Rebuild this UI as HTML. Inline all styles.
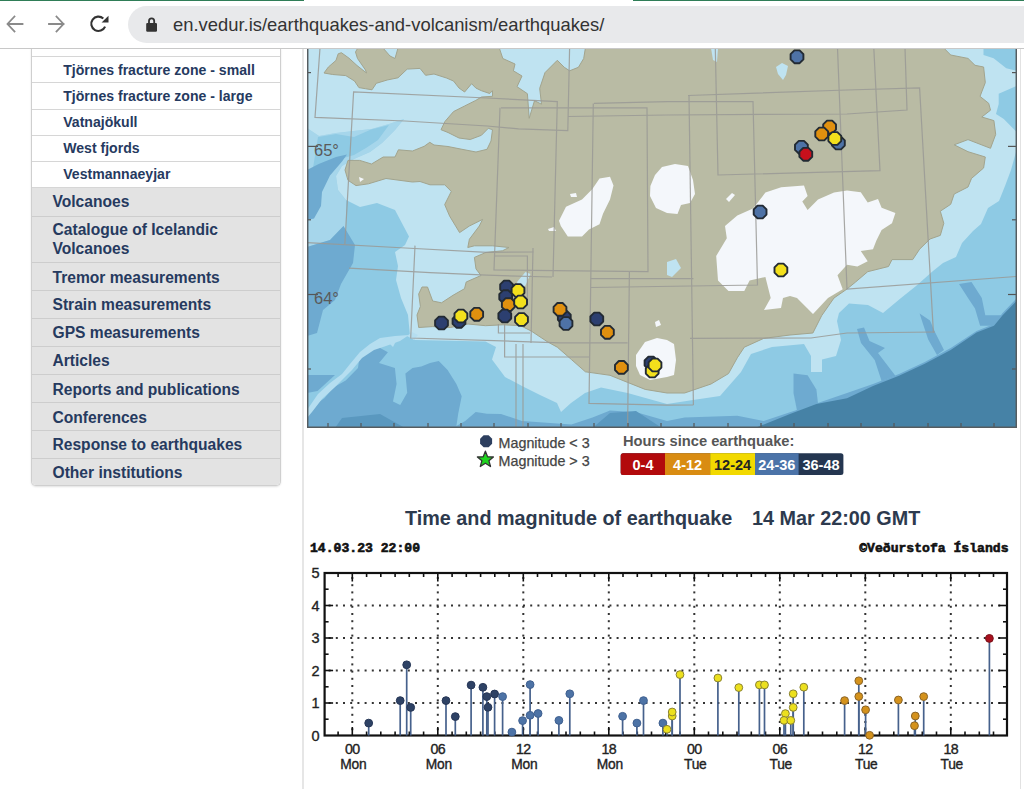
<!DOCTYPE html>
<html><head><meta charset="utf-8">
<style>
*{box-sizing:border-box;margin:0;padding:0}
html,body{width:1024px;height:789px;overflow:hidden;background:#fff;font-family:"Liberation Sans",sans-serif;position:relative}
.abs{position:absolute}
#topbar{left:0;top:0;width:1024px;height:49px;z-index:2;background:#fff;border-bottom:1px solid #c8c8c8}
#pill{z-index:3;left:128px;top:6px;width:920px;height:37px;border-radius:18.5px;background:#e8e9eb}
#url{z-index:3;left:173px;top:13.4px;font-size:18.4px;color:#333;white-space:nowrap;line-height:24px}
#side{left:31px;top:48px;width:250px;height:438px;border:1px solid #cfcfcf;border-top:none;border-radius:0 0 5px 5px;background:#fff;overflow:hidden;box-shadow:0 1px 2px rgba(0,0,0,.12)}
.it{position:absolute;left:0;width:248px;border-bottom:1px solid #d6d6d6;font-weight:bold;color:#263a5f;white-space:nowrap}
.sub{background:#fff;font-size:14.08px;padding-left:31.2px}
.grey{background:#e3e3e3;font-size:15.6px;padding-left:20.5px;border-bottom-color:#cdcdcd}
.vline{background:#e0e0e0;width:1px}
</style></head><body>
<div id="topbar" class="abs">
  <div class="abs" style="left:0;top:0;width:304px;height:1px;background:#2f7d57"></div>
  <div class="abs" style="left:633px;top:0;width:391px;height:1px;background:#2f7d57"></div>
  <svg class="abs" style="left:0;top:0" width="128" height="48">
    <g fill="none" stroke="#8a8a8a" stroke-width="1.8" stroke-linecap="square">
      <path d="M8 24 H22.5 M14.5 16.5 L7.5 24 L14.5 31.5"/>
      <path d="M49 24 H63.5 M56.5 16.5 L63.5 24 L56.5 31.5"/>
    </g>
    <path d="M105.1 26.6 A7.2 7.2 0 1 1 103.3 18.45" fill="none" stroke="#333" stroke-width="2.1"/>
    <path d="M108.5 15.8 L108.5 22.4 L101.6 22.4 Z" fill="#333"/>
  </svg>
</div>
<div id="pill" class="abs"></div>
<svg class="abs" style="left:144px;top:16px;z-index:3" width="16" height="18">
  <path d="M5 7.5 V4.9 A2.6 2.6 0 0 1 10.2 4.9 V7.5" fill="none" stroke="#333" stroke-width="1.8"/>
  <rect x="2.2" y="6.9" width="10.8" height="8.9" rx="1.2" fill="#333"/>
</svg>
<div id="url" class="abs">en.vedur.is/earthquakes-and-volcanism/earthquakes/</div>

<div class="abs vline" style="left:302px;top:49px;height:740px;width:2px;background:#e6e6e6"></div>
<div class="abs vline" style="left:1019.5px;top:49px;height:740px;width:1.6px;background:#e2e2e2"></div>

<div id="side" class="abs">
  <div class="it sub" style="top:0.0px;height:9.1px;line-height:7.8px;"></div>
  <div class="it sub" style="top:9.6px;height:25.9px;line-height:24.1px;">Tjörnes fracture zone - small</div>
  <div class="it sub" style="top:35.5px;height:26.5px;line-height:24.7px;">Tjörnes fracture zone - large</div>
  <div class="it sub" style="top:62.0px;height:26.0px;line-height:24.2px;">Vatnajökull</div>
  <div class="it sub" style="top:88.0px;height:26.0px;line-height:24.2px;">West fjords</div>
  <div class="it sub" style="top:114.0px;height:26.0px;line-height:24.2px;">Vestmannaeyjar</div>
  <div class="it grey" style="top:140.0px;height:28.7px;line-height:28.9px;">Volcanoes</div>
  <div class="it grey" style="top:168.7px;height:46.6px;line-height:18.3px;padding-top:4.8px;">Catalogue of Icelandic<br>Volcanoes</div>
  <div class="it grey" style="top:215.3px;height:28.1px;line-height:29.1px;">Tremor measurements</div>
  <div class="it grey" style="top:243.4px;height:27.9px;line-height:28.9px;">Strain measurements</div>
  <div class="it grey" style="top:271.3px;height:27.8px;line-height:28.8px;">GPS measurements</div>
  <div class="it grey" style="top:299.1px;height:27.9px;line-height:28.9px;">Articles</div>
  <div class="it grey" style="top:327.0px;height:28.0px;line-height:29.0px;">Reports and publications</div>
  <div class="it grey" style="top:355.0px;height:28.2px;line-height:29.2px;">Conferences</div>
  <div class="it grey" style="top:383.2px;height:27.8px;line-height:28.8px;">Response to earthquakes</div>
  <div class="it grey" style="top:411.0px;height:27.5px;line-height:28.5px;border-bottom:none;">Other institutions</div>
</div>

<svg class="abs" style="left:307px;top:48px" width="710" height="380" viewBox="307 48 710 380">
<rect x="307" y="48" width="710" height="380" fill="#8ecae4"/>
<polygon fill="#a6d6eb" points="307.0,128.0 319.0,136.0 336.0,133.0 371.5,129.0 389.0,124.0 404.0,119.0 395.0,130.0 382.0,143.0 370.0,152.0 354.0,159.0 342.0,166.0 336.0,176.0 338.0,190.0 346.0,200.0 346.0,232.0 343.5,226.0 330.0,240.0 307.0,247.0"/>
<polygon fill="#bfe3f1" points="307.0,48.0 1016.0,48.0 1016.0,152.0 1011.0,170.0 1005.0,186.0 999.0,201.0 988.0,208.0 981.0,224.0 973.0,231.0 962.0,243.0 956.0,257.0 943.0,263.0 933.0,271.0 916.0,286.0 901.0,298.0 883.0,313.0 868.0,305.0 849.0,303.5 839.0,313.0 837.0,321.0 841.0,340.0 836.0,356.0 822.0,359.5 822.0,372.0 811.0,372.0 811.0,356.0 804.0,344.0 772.0,347.0 751.0,354.0 741.0,372.0 720.0,396.0 693.0,400.0 667.0,404.0 627.6,393.0 601.0,387.6 585.0,393.0 571.0,403.0 561.0,412.0 557.0,403.0 540.0,395.0 522.0,386.0 505.0,377.0 492.0,359.5 496.0,347.0 485.5,341.5 415.0,340.0 410.0,336.0 408.0,315.0 401.0,298.0 396.0,280.0 398.0,266.0 395.0,252.0 405.0,245.0 409.0,236.5 395.0,210.0 377.0,203.0 360.0,207.0 346.0,200.0 338.0,190.0 336.0,176.0 342.0,166.0 354.0,159.0 370.0,152.0 382.0,143.0 395.0,130.0 404.0,119.0 389.0,124.0 371.5,129.0 336.0,133.0 319.0,136.0 307.0,128.0"/>
<polygon fill="#8ecae4" points="318.0,137.0 336.0,134.0 354.0,137.0 371.0,129.5 389.0,125.0 378.0,140.0 366.0,148.0 354.0,155.0 340.0,159.0 325.0,164.0 313.0,168.0"/>
<polygon fill="#8ecae4" points="983.5,48.0 1016.4,48.0 1016.4,70.8 1006.3,68.3 993.6,58.2 983.5,55.0"/>
<polygon fill="#8ecae4" points="998.7,93.7 1016.4,86.0 1016.4,131.8 1003.8,119.0 996.0,114.0 998.7,104.0"/>
<polygon fill="#6eaad0" points="307.0,170.0 318.7,164.0 336.0,157.0 347.0,154.5 342.0,161.6 330.0,175.6 322.0,192.0 321.0,206.0 314.0,218.5 307.0,220.0"/>
<polygon fill="#6eaad0" points="307.0,247.0 330.0,240.0 343.5,226.0 355.0,245.0 353.0,263.0 341.0,284.0 335.0,300.0 323.0,310.0 317.0,333.0 307.0,336.0"/>
<polygon fill="#6eaad0" points="307.0,375.0 335.0,375.0 317.5,391.0 307.0,393.0"/>
<polygon fill="#6eaad0" points="307.0,428.0 307.0,412.0 310.5,408.6 324.6,398.0 333.4,387.5 345.7,380.4 358.0,368.0 359.7,355.8 373.8,344.4 387.9,352.3 379.0,362.9 394.9,368.0 396.6,384.0 393.0,401.5 400.2,405.0 407.2,392.7 405.4,373.4 412.5,368.0 421.3,366.4 430.0,362.9 438.8,361.0 447.6,369.9 456.4,384.0 461.7,396.2 458.2,413.8 456.4,426.1 465.2,420.9 475.7,412.0 487.0,413.8 501.0,414.0 522.0,421.0 571.4,424.5 592.5,417.5 610.0,410.5 636.4,412.2 667.0,421.0 684.6,417.5 737.3,415.8 763.7,421.0 790.0,412.2 816.4,403.4 847.0,393.0 873.0,384.0 899.0,374.0 924.8,362.0 950.7,348.0 976.6,331.0 994.0,324.0 1002.6,313.0 1016.0,299.0 1016.0,428.0"/>
<polygon fill="#6eaad0" points="793.5,373.6 807.6,375.3 816.4,389.4 818.0,403.4 797.0,410.5 793.5,393.0"/>
<polygon fill="#6eaad0" points="857.0,329.0 864.0,327.4 869.5,341.0 885.0,348.0 878.0,353.0 895.4,375.8 881.6,381.0 874.7,360.0 861.0,343.0"/>
<polygon fill="#6eaad0" points="919.6,313.6 930.0,320.5 935.2,332.6 944.0,350.0 937.0,355.0 928.2,339.5 923.0,324.0"/>
<polygon fill="#6eaad0" points="959.0,284.0 971.5,282.0 981.8,298.0 985.3,315.3 1002.6,315.3 994.0,325.7 980.1,325.7 975.0,308.4 968.0,298.0"/>
<polygon fill="#b5def0" points="307.0,410.0 318.0,394.0 330.0,383.0 342.0,374.0 350.0,364.0 360.0,352.0 370.0,344.0 380.0,338.0 395.0,336.0 409.0,335.0 400.0,341.0 386.0,346.0 374.0,350.0 362.0,358.0 352.0,370.0 344.0,378.0 334.0,388.0 322.0,399.0 312.0,412.0 307.0,418.0"/>
<polygon fill="#b5def0" points="407.0,336.0 412.0,332.0 418.0,335.0 414.0,340.0"/>
<polygon fill="#b5def0" points="389.0,343.0 396.0,341.0 393.0,347.0"/>
<polygon fill="#5a98bf" points="335.0,428.0 342.0,418.0 380.0,414.0 405.0,428.0"/>
<polygon fill="#5a98bf" points="592.5,428.0 610.0,413.0 636.0,411.0 662.0,428.0"/>
<polygon fill="#4682a6" points="754.9,428.0 790.0,414.0 816.4,404.0 847.0,398.3 873.0,386.0 899.0,375.8 924.8,363.7 950.7,349.9 976.6,332.6 994.0,325.7 1002.6,315.3 1016.0,301.5 1016.0,428.0"/>
<polygon fill="#b9bba4" stroke="#a2a48e" stroke-width="1" points="357.8,48.0 383.0,48.0 390.0,56.0 395.0,58.5 398.0,48.0 499.3,48.0 502.8,58.5 515.0,64.0 513.4,70.8 522.0,76.0 517.0,86.7 527.4,93.7 529.2,118.3 534.5,100.7 541.5,104.2 539.7,88.4 545.0,72.6 557.3,60.3 564.3,67.3 569.6,70.8 578.4,67.3 583.7,58.5 585.4,48.0 943.8,48.0 950.7,55.0 968.0,58.4 975.0,65.3 983.6,67.0 985.3,82.6 980.0,96.4 988.7,103.3 990.5,110.2 981.8,117.0 993.9,120.6 995.7,134.4 990.5,148.3 968.0,139.6 954.2,144.8 968.0,151.7 985.3,157.0 983.6,168.0 971.5,178.4 968.0,187.0 954.2,194.0 950.7,204.3 940.3,211.2 943.8,223.3 940.3,235.4 930.0,239.0 919.6,249.2 912.7,259.6 892.0,259.6 888.5,266.5 867.7,271.7 855.6,282.0 847.0,289.0 834.0,298.0 821.7,315.6 812.9,333.0 790.0,335.0 763.7,338.4 744.3,347.2 737.3,357.8 728.5,373.6 711.0,384.0 684.6,393.0 667.0,393.0 645.2,389.4 627.6,382.4 610.0,375.3 585.4,371.8 571.4,359.5 557.3,347.2 547.0,341.5 531.2,331.0 520.6,325.7 503.0,324.8 485.5,325.7 468.0,324.0 450.3,327.5 432.7,326.6 418.7,327.5 417.0,315.0 420.4,306.4 418.7,294.0 422.0,287.0 427.5,287.0 432.7,301.0 441.5,302.8 453.0,295.3 464.5,288.7 466.2,282.0 481.0,275.5 476.0,268.9 474.4,257.4 486.0,252.4 502.4,250.8 509.0,247.5 492.5,245.8 474.4,245.8 467.8,247.5 469.4,239.2 479.3,226.0 482.6,219.4 469.4,226.0 459.6,232.6 449.7,216.2 444.7,204.6 451.3,191.4 444.7,184.8 430.0,184.8 420.0,181.5 412.4,182.0 386.0,178.5 368.5,183.8 356.0,185.6 348.0,180.3 345.0,170.0 348.0,160.4 359.7,160.4 371.5,164.0 383.2,157.0 395.0,157.0 398.4,149.8 412.5,151.0 424.2,146.3 429.8,142.3 434.0,145.0 448.0,146.5 462.0,149.3 476.0,152.0 487.0,149.3 491.0,141.0 492.5,129.7 488.3,128.3 481.4,135.3 470.2,139.5 459.0,138.0 448.0,132.5 441.0,129.7 445.0,121.4 453.5,111.6 464.6,106.0 475.8,100.4 481.4,97.0 492.5,96.3 492.5,90.7 489.7,93.5 481.4,90.7 475.8,88.0 471.6,83.7 464.6,92.0 459.0,88.0 453.5,81.0 446.5,78.0 434.0,74.0 425.6,75.3 420.0,68.4 407.2,69.1 398.0,77.8 387.2,80.0 376.3,83.3 372.0,89.8 365.4,88.7 358.9,87.6 354.5,81.0 345.8,75.6 332.7,74.5 324.0,73.0 328.4,67.0 336.0,60.4 338.2,53.8 341.4,52.7 349.0,58.2 357.0,65.5 366.5,73.0 365.5,70.0 357.5,58.5 355.5,52.0"/>
<polygon fill="#f4f7fb" points="559.0,220.7 566.0,206.7 582.0,199.6 592.4,189.0 599.5,178.5 610.0,176.8 613.5,185.6 610.0,199.6 603.0,213.7 599.5,224.2 589.0,229.5 582.0,236.5 567.8,236.5 560.8,226.0"/>
<polygon fill="#f4f7fb" points="650.4,186.0 655.0,175.0 662.0,167.0 675.0,164.0 688.0,166.0 693.0,180.0 695.0,194.0 690.0,203.0 681.0,205.0 677.5,214.0 667.0,213.0 656.0,208.0 650.0,196.0"/>
<polygon fill="#f4f7fb" points="753.0,208.4 765.4,192.6 781.2,187.3 804.0,185.6 807.6,196.0 802.3,201.4 807.6,210.0 818.0,199.6 834.0,192.6 847.0,190.5 860.8,192.2 867.7,202.6 878.0,199.0 881.6,207.8 895.4,213.0 892.0,223.3 881.6,230.0 876.4,240.6 873.0,249.2 860.8,251.0 867.7,261.3 857.4,266.5 847.0,264.8 837.5,275.2 842.7,289.3 828.0,298.0 813.0,314.0 807.0,308.0 797.0,298.0 790.0,296.0 783.0,298.0 781.0,308.0 764.0,310.0 770.7,298.0 765.4,277.0 749.6,280.5 744.3,291.0 728.5,291.0 718.0,280.5 716.2,255.9 726.8,238.3 725.0,226.0 737.3,215.5"/>
<polygon fill="#f4f7fb" points="726.0,199.0 732.0,193.0 735.0,195.0 729.0,202.0"/>
<polygon fill="#f4f7fb" points="636.0,355.0 645.0,342.0 657.0,338.0 667.0,340.0 674.0,344.0 676.0,360.0 674.0,375.0 667.0,377.0 650.0,380.0 640.0,375.0 636.0,366.0"/>
<polygon fill="#f4f7fb" points="655.0,322.0 659.0,320.0 661.0,325.0 656.0,327.0"/>
<polygon fill="#f4f7fb" points="570.0,194.0 576.0,193.0 577.0,197.0 571.0,197.0"/>
<polygon fill="#f4f7fb" points="548.0,229.0 554.0,227.0 556.0,231.0 549.0,231.0"/>
<polygon fill="#f4f7fb" points="359.0,177.0 364.0,179.0 360.0,182.0"/>
<polygon fill="#bfe3f1" points="776.0,67.0 782.0,63.0 788.0,66.0 786.0,75.0 783.0,80.0 778.0,74.0"/>
<polygon fill="#bfe3f1" points="517.0,282.0 525.5,272.0 530.4,274.0 525.5,285.4 519.0,288.7"/>
<polygon fill="#bfe3f1" points="667.0,262.0 676.0,259.0 681.0,268.0 672.0,277.0 667.0,275.0"/>
<polygon fill="#bfe3f1" points="711.0,48.0 718.0,48.0 717.0,62.0 713.0,60.0"/>
<g fill="none" stroke="#9a9a96" stroke-width="1.2" opacity="0.85">
<polyline points="320.0,48.0 315.0,117.4 405.0,121.0 487.0,126.0 518.6,128.8 567.8,130.6 569.6,48.0"/>
<polyline points="553.0,277.0 557.3,101.6 487.0,98.0 353.6,92.0 344.8,245.0"/>
<polyline points="307.0,242.7 405.4,248.0 487.0,252.4 533.6,252.0"/>
<polyline points="533.0,248.0 531.0,343.0"/>
<polyline points="349.0,268.2 430.0,272.6 487.0,275.2 552.0,277.0"/>
<polyline points="501.0,107.8 647.0,107.8 648.0,271.7 494.0,270.0 500.0,107.8"/>
<polyline points="568.0,116.5 667.0,115.0 847.0,114.0 907.0,110.0 905.0,48.0"/>
<polyline points="594.0,103.4 667.0,101.6 753.0,101.6 757.5,285.0 590.7,287.5"/>
<polyline points="593.3,103.4 589.0,403.4 667.0,405.2 693.4,405.0"/>
<polyline points="590.7,278.7 693.4,278.7"/>
<polyline points="688.0,95.5 847.0,90.0 919.6,87.8 933.4,332.6"/>
<polyline points="689.0,95.5 693.4,405.0"/>
<polyline points="690.0,338.4 811.0,338.0 847.0,333.0 935.0,332.0"/>
<polyline points="715.3,48.0 718.0,175.0 880.0,170.6 873.8,48.0"/>
<polyline points="837.5,48.0 847.0,289.0 1016.0,276.5"/>
<polyline points="415.0,245.6 410.7,338.0 560.0,342.8 627.6,342.8"/>
<polyline points="629.4,272.0 627.6,428.0"/>
<polyline points="498.4,324.0 498.4,333.0 530.0,333.0"/>
<polyline points="504.6,324.0 504.6,357.0 589.0,357.0"/>
<polyline points="516.0,344.0 516.0,428.0"/>
<polyline points="523.0,344.0 523.0,428.0"/>
<polyline points="494.0,256.0 527.4,256.0 527.4,298.0"/>
</g>
<g stroke="#555" stroke-width="1.2"><line x1="328" y1="428" x2="328" y2="423"/><line x1="361" y1="428" x2="361" y2="423"/><line x1="394" y1="428" x2="394" y2="423"/><line x1="428" y1="428" x2="428" y2="423"/><line x1="461" y1="428" x2="461" y2="423"/><line x1="494" y1="428" x2="494" y2="423"/><line x1="528" y1="428" x2="528" y2="423"/><line x1="561" y1="428" x2="561" y2="423"/><line x1="594" y1="428" x2="594" y2="423"/><line x1="628" y1="428" x2="628" y2="423"/><line x1="661" y1="428" x2="661" y2="423"/><line x1="694" y1="428" x2="694" y2="423"/><line x1="728" y1="428" x2="728" y2="423"/><line x1="761" y1="428" x2="761" y2="423"/><line x1="794" y1="428" x2="794" y2="423"/><line x1="828" y1="428" x2="828" y2="423"/><line x1="861" y1="428" x2="861" y2="423"/><line x1="894" y1="428" x2="894" y2="423"/><line x1="928" y1="428" x2="928" y2="423"/><line x1="961" y1="428" x2="961" y2="423"/><line x1="994" y1="428" x2="994" y2="423"/><line x1="307" y1="72.6" x2="311" y2="72.6"/><line x1="1016" y1="72.6" x2="1012" y2="72.6"/><line x1="307" y1="219.8" x2="311" y2="219.8"/><line x1="1016" y1="219.8" x2="1012" y2="219.8"/><line x1="307" y1="369" x2="311" y2="369"/><line x1="1016" y1="369" x2="1012" y2="369"/><line x1="307" y1="146.4" x2="318" y2="146.4"/><line x1="1016" y1="146.4" x2="1008" y2="146.4"/><line x1="307" y1="294.5" x2="318" y2="294.5"/><line x1="1016" y1="294.5" x2="1008" y2="294.5"/></g>
<text x="314" y="155.5" font-family="Liberation Sans" font-size="16.5" fill="#5a5a5a">65°</text>
<text x="314" y="303.5" font-family="Liberation Sans" font-size="16.5" fill="#5a5a5a">64°</text>
<polygon points="803.4,59.4 799.6,63.2 794.4,63.2 790.6,59.4 790.6,54.2 794.4,50.4 799.6,50.4 803.4,54.2" fill="#4e72a6" stroke="#222a33" stroke-width="1.9" stroke-linejoin="round"/>
<polygon points="807.8,149.9 804.0,153.7 798.8,153.7 795.0,149.9 795.0,144.7 798.8,140.9 804.0,140.9 807.8,144.7" fill="#4e72a6" stroke="#222a33" stroke-width="1.9" stroke-linejoin="round"/>
<polygon points="812.2,156.9 808.4,160.7 803.2,160.7 799.4,156.9 799.4,151.7 803.2,147.9 808.4,147.9 812.2,151.7" fill="#c8101c" stroke="#222a33" stroke-width="1.9" stroke-linejoin="round"/>
<polygon points="844.8,145.6 841.0,149.4 835.8,149.4 832.0,145.6 832.0,140.4 835.8,136.6 841.0,136.6 844.8,140.4" fill="#4e72a6" stroke="#222a33" stroke-width="1.9" stroke-linejoin="round"/>
<polygon points="836.0,129.6 832.2,133.4 827.0,133.4 823.2,129.6 823.2,124.4 827.0,120.6 832.2,120.6 836.0,124.4" fill="#e0900f" stroke="#222a33" stroke-width="1.9" stroke-linejoin="round"/>
<polygon points="828.1,136.6 824.3,140.4 819.1,140.4 815.3,136.6 815.3,131.4 819.1,127.6 824.3,127.6 828.1,131.4" fill="#e0900f" stroke="#222a33" stroke-width="1.9" stroke-linejoin="round"/>
<polygon points="841.2,141.1 837.4,144.9 832.2,144.9 828.4,141.1 828.4,135.9 832.2,132.1 837.4,132.1 841.2,135.9" fill="#f3e01c" stroke="#222a33" stroke-width="1.9" stroke-linejoin="round"/>
<polygon points="766.5,214.6 762.7,218.4 757.5,218.4 753.7,214.6 753.7,209.4 757.5,205.6 762.7,205.6 766.5,209.4" fill="#4e72a6" stroke="#222a33" stroke-width="1.9" stroke-linejoin="round"/>
<polygon points="787.3,272.6 783.5,276.4 778.3,276.4 774.5,272.6 774.5,267.4 778.3,263.6 783.5,263.6 787.3,267.4" fill="#f3e01c" stroke="#222a33" stroke-width="1.9" stroke-linejoin="round"/>
<polygon points="447.9,325.6 444.1,329.4 438.9,329.4 435.1,325.6 435.1,320.4 438.9,316.6 444.1,316.6 447.9,320.4" fill="#2c3f70" stroke="#222a33" stroke-width="1.9" stroke-linejoin="round"/>
<polygon points="465.4,323.9 461.6,327.7 456.4,327.7 452.6,323.9 452.6,318.7 456.4,314.9 461.6,314.9 465.4,318.7" fill="#2c3f70" stroke="#222a33" stroke-width="1.9" stroke-linejoin="round"/>
<polygon points="467.3,318.6 463.5,322.4 458.3,322.4 454.5,318.6 454.5,313.4 458.3,309.6 463.5,309.6 467.3,313.4" fill="#f3e01c" stroke="#222a33" stroke-width="1.9" stroke-linejoin="round"/>
<polygon points="483.1,316.9 479.3,320.7 474.1,320.7 470.3,316.9 470.3,311.7 474.1,307.9 479.3,307.9 483.1,311.7" fill="#e0900f" stroke="#222a33" stroke-width="1.9" stroke-linejoin="round"/>
<polygon points="513.0,289.6 509.2,293.4 504.0,293.4 500.2,289.6 500.2,284.4 504.0,280.6 509.2,280.6 513.0,284.4" fill="#2c3f70" stroke="#222a33" stroke-width="1.9" stroke-linejoin="round"/>
<polygon points="524.4,293.1 520.6,296.9 515.4,296.9 511.6,293.1 511.6,287.9 515.4,284.1 520.6,284.1 524.4,287.9" fill="#f3e01c" stroke="#222a33" stroke-width="1.9" stroke-linejoin="round"/>
<polygon points="512.1,299.3 508.3,303.1 503.1,303.1 499.3,299.3 499.3,294.1 503.1,290.3 508.3,290.3 512.1,294.1" fill="#2c3f70" stroke="#222a33" stroke-width="1.9" stroke-linejoin="round"/>
<polygon points="514.7,307.2 510.9,311.0 505.7,311.0 501.9,307.2 501.9,302.0 505.7,298.2 510.9,298.2 514.7,302.0" fill="#e0900f" stroke="#222a33" stroke-width="1.9" stroke-linejoin="round"/>
<polygon points="527.0,304.6 523.2,308.4 518.0,308.4 514.2,304.6 514.2,299.4 518.0,295.6 523.2,295.6 527.0,299.4" fill="#f3e01c" stroke="#222a33" stroke-width="1.9" stroke-linejoin="round"/>
<polygon points="511.2,318.6 507.4,322.4 502.2,322.4 498.4,318.6 498.4,313.4 502.2,309.6 507.4,309.6 511.2,313.4" fill="#2c3f70" stroke="#222a33" stroke-width="1.9" stroke-linejoin="round"/>
<polygon points="527.9,322.1 524.1,325.9 518.9,325.9 515.1,322.1 515.1,316.9 518.9,313.1 524.1,313.1 527.9,316.9" fill="#f3e01c" stroke="#222a33" stroke-width="1.9" stroke-linejoin="round"/>
<polygon points="570.7,319.9 566.9,323.7 561.7,323.7 557.9,319.9 557.9,314.7 561.7,310.9 566.9,310.9 570.7,314.7" fill="#2c3f70" stroke="#222a33" stroke-width="1.9" stroke-linejoin="round"/>
<polygon points="572.4,326.1 568.6,329.9 563.4,329.9 559.6,326.1 559.6,320.9 563.4,317.1 568.6,317.1 572.4,320.9" fill="#4e72a6" stroke="#222a33" stroke-width="1.9" stroke-linejoin="round"/>
<polygon points="566.4,312.0 562.6,315.8 557.4,315.8 553.6,312.0 553.6,306.8 557.4,303.0 562.6,303.0 566.4,306.8" fill="#e0900f" stroke="#222a33" stroke-width="1.9" stroke-linejoin="round"/>
<polygon points="603.2,321.6 599.4,325.4 594.2,325.4 590.4,321.6 590.4,316.4 594.2,312.6 599.4,312.6 603.2,316.4" fill="#2c3f70" stroke="#222a33" stroke-width="1.9" stroke-linejoin="round"/>
<polygon points="613.8,334.9 610.0,338.7 604.8,338.7 601.0,334.9 601.0,329.7 604.8,325.9 610.0,325.9 613.8,329.7" fill="#e0900f" stroke="#222a33" stroke-width="1.9" stroke-linejoin="round"/>
<polygon points="627.8,370.0 624.0,373.8 618.8,373.8 615.0,370.0 615.0,364.8 618.8,361.0 624.0,361.0 627.8,364.8" fill="#e0900f" stroke="#222a33" stroke-width="1.9" stroke-linejoin="round"/>
<polygon points="657.4,365.6 653.6,369.4 648.4,369.4 644.6,365.6 644.6,360.4 648.4,356.6 653.6,356.6 657.4,360.4" fill="#2c3f70" stroke="#222a33" stroke-width="1.9" stroke-linejoin="round"/>
<polygon points="658.6,373.6 654.8,377.4 649.6,377.4 645.8,373.6 645.8,368.4 649.6,364.6 654.8,364.6 658.6,368.4" fill="#f3e01c" stroke="#222a33" stroke-width="1.9" stroke-linejoin="round"/>
<polygon points="661.4,367.6 657.6,371.4 652.4,371.4 648.6,367.6 648.6,362.4 652.4,358.6 657.6,358.6 661.4,362.4" fill="#f3e01c" stroke="#222a33" stroke-width="1.9" stroke-linejoin="round"/>
<path d="M307.7 48 V427.3 H1016.3 V48" fill="none" stroke="#555c60" stroke-width="1.5"/>
</svg>

<svg class="abs" style="left:470px;top:428px" width="400" height="52" viewBox="470 428 400 52">
  <polygon points="483.6,435.2 488.6,435.2 492.1,438.7 492.1,443.7 488.6,447.2 483.6,447.2 480.1,443.7 480.1,438.7" fill="#2d3f5f"/>
  <polygon points="485.4,451.2 487.6,456.8 493.4,457 488.9,460.7 490.5,466.5 485.4,463.2 480.3,466.5 481.9,460.7 477.4,457 483.2,456.8" fill="#1ed51e" stroke="#333" stroke-width="1.3" stroke-linejoin="round"/>
  <text x="498.6" y="447.5" font-family="Liberation Sans" font-size="14.3" fill="#444" stroke="#444" stroke-width="0.25">Magnitude &lt; 3</text>
  <text x="498.6" y="465.9" font-family="Liberation Sans" font-size="14.3" fill="#444" stroke="#444" stroke-width="0.25">Magnitude &gt; 3</text>
  <text x="623" y="446" font-family="Liberation Sans" font-weight="bold" font-size="14.7" fill="#565656">Hours since earthquake:</text>
  <rect x="620.7" y="453.2" width="222.7" height="21.8" rx="2.5" fill="#243650"/>
  <rect x="620.7" y="453.2" width="50" height="21.8" rx="2.5" fill="#b20a0c"/>
  <rect x="665" y="453.2" width="45.2" height="21.8" fill="#d98c12"/>
  <rect x="710.2" y="453.2" width="44.8" height="21.8" fill="#f2d900"/>
  <rect x="755" y="453.2" width="43.6" height="21.8" fill="#4b73a8"/>
  <g font-family="Liberation Sans" font-weight="bold" font-size="14.5" text-anchor="middle">
    <text x="643" y="469.5" fill="#fff">0-4</text>
    <text x="687.6" y="469.5" fill="#fff">4-12</text>
    <text x="732.6" y="469.5" fill="#222">12-24</text>
    <text x="776.8" y="469.5" fill="#fff">24-36</text>
    <text x="821" y="469.5" fill="#fff">36-48</text>
  </g>
</svg>

<svg class="abs" style="left:0;top:480px" width="1024" height="309" viewBox="0 480 1024 309">
<text x="405" y="525" font-family="Liberation Sans" font-weight="bold" font-size="19.8" fill="#2d3a4e" xml:space="preserve">Time and magnitude of earthquake</text>
<text x="752" y="525" font-family="Liberation Sans" font-weight="bold" font-size="19.8" fill="#2d3a4e">14 Mar 22:00 GMT</text>
<text x="310" y="551.5" font-family="Liberation Mono" font-weight="bold" font-size="13.1" fill="#111" stroke="#111" stroke-width="0.6">14.03.23 22:00</text>
<text x="1008.5" y="551.5" text-anchor="end" font-family="Liberation Mono" font-weight="bold" font-size="13.1" fill="#111" stroke="#111" stroke-width="0.6">©Veðurstofa Íslands</text>
<g fill="#333"><rect x="351.3" y="577.0" width="2" height="2"/><rect x="351.3" y="584.2" width="2" height="2"/><rect x="351.3" y="591.4" width="2" height="2"/><rect x="351.3" y="598.6" width="2" height="2"/><rect x="351.3" y="605.8" width="2" height="2"/><rect x="351.3" y="613.0" width="2" height="2"/><rect x="351.3" y="620.2" width="2" height="2"/><rect x="351.3" y="627.4" width="2" height="2"/><rect x="351.3" y="634.6" width="2" height="2"/><rect x="351.3" y="641.8" width="2" height="2"/><rect x="351.3" y="649.0" width="2" height="2"/><rect x="351.3" y="656.2" width="2" height="2"/><rect x="351.3" y="663.4" width="2" height="2"/><rect x="351.3" y="670.6" width="2" height="2"/><rect x="351.3" y="677.8" width="2" height="2"/><rect x="351.3" y="685.0" width="2" height="2"/><rect x="351.3" y="692.2" width="2" height="2"/><rect x="351.3" y="699.4" width="2" height="2"/><rect x="351.3" y="706.6" width="2" height="2"/><rect x="351.3" y="713.8" width="2" height="2"/><rect x="351.3" y="721.0" width="2" height="2"/><rect x="351.3" y="728.2" width="2" height="2"/><rect x="436.8" y="577.0" width="2" height="2"/><rect x="436.8" y="584.2" width="2" height="2"/><rect x="436.8" y="591.4" width="2" height="2"/><rect x="436.8" y="598.6" width="2" height="2"/><rect x="436.8" y="605.8" width="2" height="2"/><rect x="436.8" y="613.0" width="2" height="2"/><rect x="436.8" y="620.2" width="2" height="2"/><rect x="436.8" y="627.4" width="2" height="2"/><rect x="436.8" y="634.6" width="2" height="2"/><rect x="436.8" y="641.8" width="2" height="2"/><rect x="436.8" y="649.0" width="2" height="2"/><rect x="436.8" y="656.2" width="2" height="2"/><rect x="436.8" y="663.4" width="2" height="2"/><rect x="436.8" y="670.6" width="2" height="2"/><rect x="436.8" y="677.8" width="2" height="2"/><rect x="436.8" y="685.0" width="2" height="2"/><rect x="436.8" y="692.2" width="2" height="2"/><rect x="436.8" y="699.4" width="2" height="2"/><rect x="436.8" y="706.6" width="2" height="2"/><rect x="436.8" y="713.8" width="2" height="2"/><rect x="436.8" y="721.0" width="2" height="2"/><rect x="436.8" y="728.2" width="2" height="2"/><rect x="522.3" y="577.0" width="2" height="2"/><rect x="522.3" y="584.2" width="2" height="2"/><rect x="522.3" y="591.4" width="2" height="2"/><rect x="522.3" y="598.6" width="2" height="2"/><rect x="522.3" y="605.8" width="2" height="2"/><rect x="522.3" y="613.0" width="2" height="2"/><rect x="522.3" y="620.2" width="2" height="2"/><rect x="522.3" y="627.4" width="2" height="2"/><rect x="522.3" y="634.6" width="2" height="2"/><rect x="522.3" y="641.8" width="2" height="2"/><rect x="522.3" y="649.0" width="2" height="2"/><rect x="522.3" y="656.2" width="2" height="2"/><rect x="522.3" y="663.4" width="2" height="2"/><rect x="522.3" y="670.6" width="2" height="2"/><rect x="522.3" y="677.8" width="2" height="2"/><rect x="522.3" y="685.0" width="2" height="2"/><rect x="522.3" y="692.2" width="2" height="2"/><rect x="522.3" y="699.4" width="2" height="2"/><rect x="522.3" y="706.6" width="2" height="2"/><rect x="522.3" y="713.8" width="2" height="2"/><rect x="522.3" y="721.0" width="2" height="2"/><rect x="522.3" y="728.2" width="2" height="2"/><rect x="607.8" y="577.0" width="2" height="2"/><rect x="607.8" y="584.2" width="2" height="2"/><rect x="607.8" y="591.4" width="2" height="2"/><rect x="607.8" y="598.6" width="2" height="2"/><rect x="607.8" y="605.8" width="2" height="2"/><rect x="607.8" y="613.0" width="2" height="2"/><rect x="607.8" y="620.2" width="2" height="2"/><rect x="607.8" y="627.4" width="2" height="2"/><rect x="607.8" y="634.6" width="2" height="2"/><rect x="607.8" y="641.8" width="2" height="2"/><rect x="607.8" y="649.0" width="2" height="2"/><rect x="607.8" y="656.2" width="2" height="2"/><rect x="607.8" y="663.4" width="2" height="2"/><rect x="607.8" y="670.6" width="2" height="2"/><rect x="607.8" y="677.8" width="2" height="2"/><rect x="607.8" y="685.0" width="2" height="2"/><rect x="607.8" y="692.2" width="2" height="2"/><rect x="607.8" y="699.4" width="2" height="2"/><rect x="607.8" y="706.6" width="2" height="2"/><rect x="607.8" y="713.8" width="2" height="2"/><rect x="607.8" y="721.0" width="2" height="2"/><rect x="607.8" y="728.2" width="2" height="2"/><rect x="693.3" y="577.0" width="2" height="2"/><rect x="693.3" y="584.2" width="2" height="2"/><rect x="693.3" y="591.4" width="2" height="2"/><rect x="693.3" y="598.6" width="2" height="2"/><rect x="693.3" y="605.8" width="2" height="2"/><rect x="693.3" y="613.0" width="2" height="2"/><rect x="693.3" y="620.2" width="2" height="2"/><rect x="693.3" y="627.4" width="2" height="2"/><rect x="693.3" y="634.6" width="2" height="2"/><rect x="693.3" y="641.8" width="2" height="2"/><rect x="693.3" y="649.0" width="2" height="2"/><rect x="693.3" y="656.2" width="2" height="2"/><rect x="693.3" y="663.4" width="2" height="2"/><rect x="693.3" y="670.6" width="2" height="2"/><rect x="693.3" y="677.8" width="2" height="2"/><rect x="693.3" y="685.0" width="2" height="2"/><rect x="693.3" y="692.2" width="2" height="2"/><rect x="693.3" y="699.4" width="2" height="2"/><rect x="693.3" y="706.6" width="2" height="2"/><rect x="693.3" y="713.8" width="2" height="2"/><rect x="693.3" y="721.0" width="2" height="2"/><rect x="693.3" y="728.2" width="2" height="2"/><rect x="778.8" y="577.0" width="2" height="2"/><rect x="778.8" y="584.2" width="2" height="2"/><rect x="778.8" y="591.4" width="2" height="2"/><rect x="778.8" y="598.6" width="2" height="2"/><rect x="778.8" y="605.8" width="2" height="2"/><rect x="778.8" y="613.0" width="2" height="2"/><rect x="778.8" y="620.2" width="2" height="2"/><rect x="778.8" y="627.4" width="2" height="2"/><rect x="778.8" y="634.6" width="2" height="2"/><rect x="778.8" y="641.8" width="2" height="2"/><rect x="778.8" y="649.0" width="2" height="2"/><rect x="778.8" y="656.2" width="2" height="2"/><rect x="778.8" y="663.4" width="2" height="2"/><rect x="778.8" y="670.6" width="2" height="2"/><rect x="778.8" y="677.8" width="2" height="2"/><rect x="778.8" y="685.0" width="2" height="2"/><rect x="778.8" y="692.2" width="2" height="2"/><rect x="778.8" y="699.4" width="2" height="2"/><rect x="778.8" y="706.6" width="2" height="2"/><rect x="778.8" y="713.8" width="2" height="2"/><rect x="778.8" y="721.0" width="2" height="2"/><rect x="778.8" y="728.2" width="2" height="2"/><rect x="864.3" y="577.0" width="2" height="2"/><rect x="864.3" y="584.2" width="2" height="2"/><rect x="864.3" y="591.4" width="2" height="2"/><rect x="864.3" y="598.6" width="2" height="2"/><rect x="864.3" y="605.8" width="2" height="2"/><rect x="864.3" y="613.0" width="2" height="2"/><rect x="864.3" y="620.2" width="2" height="2"/><rect x="864.3" y="627.4" width="2" height="2"/><rect x="864.3" y="634.6" width="2" height="2"/><rect x="864.3" y="641.8" width="2" height="2"/><rect x="864.3" y="649.0" width="2" height="2"/><rect x="864.3" y="656.2" width="2" height="2"/><rect x="864.3" y="663.4" width="2" height="2"/><rect x="864.3" y="670.6" width="2" height="2"/><rect x="864.3" y="677.8" width="2" height="2"/><rect x="864.3" y="685.0" width="2" height="2"/><rect x="864.3" y="692.2" width="2" height="2"/><rect x="864.3" y="699.4" width="2" height="2"/><rect x="864.3" y="706.6" width="2" height="2"/><rect x="864.3" y="713.8" width="2" height="2"/><rect x="864.3" y="721.0" width="2" height="2"/><rect x="864.3" y="728.2" width="2" height="2"/><rect x="949.8" y="577.0" width="2" height="2"/><rect x="949.8" y="584.2" width="2" height="2"/><rect x="949.8" y="591.4" width="2" height="2"/><rect x="949.8" y="598.6" width="2" height="2"/><rect x="949.8" y="605.8" width="2" height="2"/><rect x="949.8" y="613.0" width="2" height="2"/><rect x="949.8" y="620.2" width="2" height="2"/><rect x="949.8" y="627.4" width="2" height="2"/><rect x="949.8" y="634.6" width="2" height="2"/><rect x="949.8" y="641.8" width="2" height="2"/><rect x="949.8" y="649.0" width="2" height="2"/><rect x="949.8" y="656.2" width="2" height="2"/><rect x="949.8" y="663.4" width="2" height="2"/><rect x="949.8" y="670.6" width="2" height="2"/><rect x="949.8" y="677.8" width="2" height="2"/><rect x="949.8" y="685.0" width="2" height="2"/><rect x="949.8" y="692.2" width="2" height="2"/><rect x="949.8" y="699.4" width="2" height="2"/><rect x="949.8" y="706.6" width="2" height="2"/><rect x="949.8" y="713.8" width="2" height="2"/><rect x="949.8" y="721.0" width="2" height="2"/><rect x="949.8" y="728.2" width="2" height="2"/><rect x="328.6" y="702.0" width="2" height="2"/><rect x="335.8" y="702.0" width="2" height="2"/><rect x="343.0" y="702.0" width="2" height="2"/><rect x="350.2" y="702.0" width="2" height="2"/><rect x="357.4" y="702.0" width="2" height="2"/><rect x="364.6" y="702.0" width="2" height="2"/><rect x="371.8" y="702.0" width="2" height="2"/><rect x="379.0" y="702.0" width="2" height="2"/><rect x="386.2" y="702.0" width="2" height="2"/><rect x="393.4" y="702.0" width="2" height="2"/><rect x="400.6" y="702.0" width="2" height="2"/><rect x="407.8" y="702.0" width="2" height="2"/><rect x="415.0" y="702.0" width="2" height="2"/><rect x="422.2" y="702.0" width="2" height="2"/><rect x="429.4" y="702.0" width="2" height="2"/><rect x="436.6" y="702.0" width="2" height="2"/><rect x="443.8" y="702.0" width="2" height="2"/><rect x="451.0" y="702.0" width="2" height="2"/><rect x="458.2" y="702.0" width="2" height="2"/><rect x="465.4" y="702.0" width="2" height="2"/><rect x="472.6" y="702.0" width="2" height="2"/><rect x="479.8" y="702.0" width="2" height="2"/><rect x="487.0" y="702.0" width="2" height="2"/><rect x="494.2" y="702.0" width="2" height="2"/><rect x="501.4" y="702.0" width="2" height="2"/><rect x="508.6" y="702.0" width="2" height="2"/><rect x="515.8" y="702.0" width="2" height="2"/><rect x="523.0" y="702.0" width="2" height="2"/><rect x="530.2" y="702.0" width="2" height="2"/><rect x="537.4" y="702.0" width="2" height="2"/><rect x="544.6" y="702.0" width="2" height="2"/><rect x="551.8" y="702.0" width="2" height="2"/><rect x="559.0" y="702.0" width="2" height="2"/><rect x="566.2" y="702.0" width="2" height="2"/><rect x="573.4" y="702.0" width="2" height="2"/><rect x="580.6" y="702.0" width="2" height="2"/><rect x="587.8" y="702.0" width="2" height="2"/><rect x="595.0" y="702.0" width="2" height="2"/><rect x="602.2" y="702.0" width="2" height="2"/><rect x="609.4" y="702.0" width="2" height="2"/><rect x="616.6" y="702.0" width="2" height="2"/><rect x="623.8" y="702.0" width="2" height="2"/><rect x="631.0" y="702.0" width="2" height="2"/><rect x="638.2" y="702.0" width="2" height="2"/><rect x="645.4" y="702.0" width="2" height="2"/><rect x="652.6" y="702.0" width="2" height="2"/><rect x="659.8" y="702.0" width="2" height="2"/><rect x="667.0" y="702.0" width="2" height="2"/><rect x="674.2" y="702.0" width="2" height="2"/><rect x="681.4" y="702.0" width="2" height="2"/><rect x="688.6" y="702.0" width="2" height="2"/><rect x="695.8" y="702.0" width="2" height="2"/><rect x="703.0" y="702.0" width="2" height="2"/><rect x="710.2" y="702.0" width="2" height="2"/><rect x="717.4" y="702.0" width="2" height="2"/><rect x="724.6" y="702.0" width="2" height="2"/><rect x="731.8" y="702.0" width="2" height="2"/><rect x="739.0" y="702.0" width="2" height="2"/><rect x="746.2" y="702.0" width="2" height="2"/><rect x="753.4" y="702.0" width="2" height="2"/><rect x="760.6" y="702.0" width="2" height="2"/><rect x="767.8" y="702.0" width="2" height="2"/><rect x="775.0" y="702.0" width="2" height="2"/><rect x="782.2" y="702.0" width="2" height="2"/><rect x="789.4" y="702.0" width="2" height="2"/><rect x="796.6" y="702.0" width="2" height="2"/><rect x="803.8" y="702.0" width="2" height="2"/><rect x="811.0" y="702.0" width="2" height="2"/><rect x="818.2" y="702.0" width="2" height="2"/><rect x="825.4" y="702.0" width="2" height="2"/><rect x="832.6" y="702.0" width="2" height="2"/><rect x="839.8" y="702.0" width="2" height="2"/><rect x="847.0" y="702.0" width="2" height="2"/><rect x="854.2" y="702.0" width="2" height="2"/><rect x="861.4" y="702.0" width="2" height="2"/><rect x="868.6" y="702.0" width="2" height="2"/><rect x="875.8" y="702.0" width="2" height="2"/><rect x="883.0" y="702.0" width="2" height="2"/><rect x="890.2" y="702.0" width="2" height="2"/><rect x="897.4" y="702.0" width="2" height="2"/><rect x="904.6" y="702.0" width="2" height="2"/><rect x="911.8" y="702.0" width="2" height="2"/><rect x="919.0" y="702.0" width="2" height="2"/><rect x="926.2" y="702.0" width="2" height="2"/><rect x="933.4" y="702.0" width="2" height="2"/><rect x="940.6" y="702.0" width="2" height="2"/><rect x="947.8" y="702.0" width="2" height="2"/><rect x="955.0" y="702.0" width="2" height="2"/><rect x="962.2" y="702.0" width="2" height="2"/><rect x="969.4" y="702.0" width="2" height="2"/><rect x="976.6" y="702.0" width="2" height="2"/><rect x="983.8" y="702.0" width="2" height="2"/><rect x="991.0" y="702.0" width="2" height="2"/><rect x="998.2" y="702.0" width="2" height="2"/><rect x="328.6" y="669.5" width="2" height="2"/><rect x="335.8" y="669.5" width="2" height="2"/><rect x="343.0" y="669.5" width="2" height="2"/><rect x="350.2" y="669.5" width="2" height="2"/><rect x="357.4" y="669.5" width="2" height="2"/><rect x="364.6" y="669.5" width="2" height="2"/><rect x="371.8" y="669.5" width="2" height="2"/><rect x="379.0" y="669.5" width="2" height="2"/><rect x="386.2" y="669.5" width="2" height="2"/><rect x="393.4" y="669.5" width="2" height="2"/><rect x="400.6" y="669.5" width="2" height="2"/><rect x="407.8" y="669.5" width="2" height="2"/><rect x="415.0" y="669.5" width="2" height="2"/><rect x="422.2" y="669.5" width="2" height="2"/><rect x="429.4" y="669.5" width="2" height="2"/><rect x="436.6" y="669.5" width="2" height="2"/><rect x="443.8" y="669.5" width="2" height="2"/><rect x="451.0" y="669.5" width="2" height="2"/><rect x="458.2" y="669.5" width="2" height="2"/><rect x="465.4" y="669.5" width="2" height="2"/><rect x="472.6" y="669.5" width="2" height="2"/><rect x="479.8" y="669.5" width="2" height="2"/><rect x="487.0" y="669.5" width="2" height="2"/><rect x="494.2" y="669.5" width="2" height="2"/><rect x="501.4" y="669.5" width="2" height="2"/><rect x="508.6" y="669.5" width="2" height="2"/><rect x="515.8" y="669.5" width="2" height="2"/><rect x="523.0" y="669.5" width="2" height="2"/><rect x="530.2" y="669.5" width="2" height="2"/><rect x="537.4" y="669.5" width="2" height="2"/><rect x="544.6" y="669.5" width="2" height="2"/><rect x="551.8" y="669.5" width="2" height="2"/><rect x="559.0" y="669.5" width="2" height="2"/><rect x="566.2" y="669.5" width="2" height="2"/><rect x="573.4" y="669.5" width="2" height="2"/><rect x="580.6" y="669.5" width="2" height="2"/><rect x="587.8" y="669.5" width="2" height="2"/><rect x="595.0" y="669.5" width="2" height="2"/><rect x="602.2" y="669.5" width="2" height="2"/><rect x="609.4" y="669.5" width="2" height="2"/><rect x="616.6" y="669.5" width="2" height="2"/><rect x="623.8" y="669.5" width="2" height="2"/><rect x="631.0" y="669.5" width="2" height="2"/><rect x="638.2" y="669.5" width="2" height="2"/><rect x="645.4" y="669.5" width="2" height="2"/><rect x="652.6" y="669.5" width="2" height="2"/><rect x="659.8" y="669.5" width="2" height="2"/><rect x="667.0" y="669.5" width="2" height="2"/><rect x="674.2" y="669.5" width="2" height="2"/><rect x="681.4" y="669.5" width="2" height="2"/><rect x="688.6" y="669.5" width="2" height="2"/><rect x="695.8" y="669.5" width="2" height="2"/><rect x="703.0" y="669.5" width="2" height="2"/><rect x="710.2" y="669.5" width="2" height="2"/><rect x="717.4" y="669.5" width="2" height="2"/><rect x="724.6" y="669.5" width="2" height="2"/><rect x="731.8" y="669.5" width="2" height="2"/><rect x="739.0" y="669.5" width="2" height="2"/><rect x="746.2" y="669.5" width="2" height="2"/><rect x="753.4" y="669.5" width="2" height="2"/><rect x="760.6" y="669.5" width="2" height="2"/><rect x="767.8" y="669.5" width="2" height="2"/><rect x="775.0" y="669.5" width="2" height="2"/><rect x="782.2" y="669.5" width="2" height="2"/><rect x="789.4" y="669.5" width="2" height="2"/><rect x="796.6" y="669.5" width="2" height="2"/><rect x="803.8" y="669.5" width="2" height="2"/><rect x="811.0" y="669.5" width="2" height="2"/><rect x="818.2" y="669.5" width="2" height="2"/><rect x="825.4" y="669.5" width="2" height="2"/><rect x="832.6" y="669.5" width="2" height="2"/><rect x="839.8" y="669.5" width="2" height="2"/><rect x="847.0" y="669.5" width="2" height="2"/><rect x="854.2" y="669.5" width="2" height="2"/><rect x="861.4" y="669.5" width="2" height="2"/><rect x="868.6" y="669.5" width="2" height="2"/><rect x="875.8" y="669.5" width="2" height="2"/><rect x="883.0" y="669.5" width="2" height="2"/><rect x="890.2" y="669.5" width="2" height="2"/><rect x="897.4" y="669.5" width="2" height="2"/><rect x="904.6" y="669.5" width="2" height="2"/><rect x="911.8" y="669.5" width="2" height="2"/><rect x="919.0" y="669.5" width="2" height="2"/><rect x="926.2" y="669.5" width="2" height="2"/><rect x="933.4" y="669.5" width="2" height="2"/><rect x="940.6" y="669.5" width="2" height="2"/><rect x="947.8" y="669.5" width="2" height="2"/><rect x="955.0" y="669.5" width="2" height="2"/><rect x="962.2" y="669.5" width="2" height="2"/><rect x="969.4" y="669.5" width="2" height="2"/><rect x="976.6" y="669.5" width="2" height="2"/><rect x="983.8" y="669.5" width="2" height="2"/><rect x="991.0" y="669.5" width="2" height="2"/><rect x="998.2" y="669.5" width="2" height="2"/><rect x="328.6" y="637.0" width="2" height="2"/><rect x="335.8" y="637.0" width="2" height="2"/><rect x="343.0" y="637.0" width="2" height="2"/><rect x="350.2" y="637.0" width="2" height="2"/><rect x="357.4" y="637.0" width="2" height="2"/><rect x="364.6" y="637.0" width="2" height="2"/><rect x="371.8" y="637.0" width="2" height="2"/><rect x="379.0" y="637.0" width="2" height="2"/><rect x="386.2" y="637.0" width="2" height="2"/><rect x="393.4" y="637.0" width="2" height="2"/><rect x="400.6" y="637.0" width="2" height="2"/><rect x="407.8" y="637.0" width="2" height="2"/><rect x="415.0" y="637.0" width="2" height="2"/><rect x="422.2" y="637.0" width="2" height="2"/><rect x="429.4" y="637.0" width="2" height="2"/><rect x="436.6" y="637.0" width="2" height="2"/><rect x="443.8" y="637.0" width="2" height="2"/><rect x="451.0" y="637.0" width="2" height="2"/><rect x="458.2" y="637.0" width="2" height="2"/><rect x="465.4" y="637.0" width="2" height="2"/><rect x="472.6" y="637.0" width="2" height="2"/><rect x="479.8" y="637.0" width="2" height="2"/><rect x="487.0" y="637.0" width="2" height="2"/><rect x="494.2" y="637.0" width="2" height="2"/><rect x="501.4" y="637.0" width="2" height="2"/><rect x="508.6" y="637.0" width="2" height="2"/><rect x="515.8" y="637.0" width="2" height="2"/><rect x="523.0" y="637.0" width="2" height="2"/><rect x="530.2" y="637.0" width="2" height="2"/><rect x="537.4" y="637.0" width="2" height="2"/><rect x="544.6" y="637.0" width="2" height="2"/><rect x="551.8" y="637.0" width="2" height="2"/><rect x="559.0" y="637.0" width="2" height="2"/><rect x="566.2" y="637.0" width="2" height="2"/><rect x="573.4" y="637.0" width="2" height="2"/><rect x="580.6" y="637.0" width="2" height="2"/><rect x="587.8" y="637.0" width="2" height="2"/><rect x="595.0" y="637.0" width="2" height="2"/><rect x="602.2" y="637.0" width="2" height="2"/><rect x="609.4" y="637.0" width="2" height="2"/><rect x="616.6" y="637.0" width="2" height="2"/><rect x="623.8" y="637.0" width="2" height="2"/><rect x="631.0" y="637.0" width="2" height="2"/><rect x="638.2" y="637.0" width="2" height="2"/><rect x="645.4" y="637.0" width="2" height="2"/><rect x="652.6" y="637.0" width="2" height="2"/><rect x="659.8" y="637.0" width="2" height="2"/><rect x="667.0" y="637.0" width="2" height="2"/><rect x="674.2" y="637.0" width="2" height="2"/><rect x="681.4" y="637.0" width="2" height="2"/><rect x="688.6" y="637.0" width="2" height="2"/><rect x="695.8" y="637.0" width="2" height="2"/><rect x="703.0" y="637.0" width="2" height="2"/><rect x="710.2" y="637.0" width="2" height="2"/><rect x="717.4" y="637.0" width="2" height="2"/><rect x="724.6" y="637.0" width="2" height="2"/><rect x="731.8" y="637.0" width="2" height="2"/><rect x="739.0" y="637.0" width="2" height="2"/><rect x="746.2" y="637.0" width="2" height="2"/><rect x="753.4" y="637.0" width="2" height="2"/><rect x="760.6" y="637.0" width="2" height="2"/><rect x="767.8" y="637.0" width="2" height="2"/><rect x="775.0" y="637.0" width="2" height="2"/><rect x="782.2" y="637.0" width="2" height="2"/><rect x="789.4" y="637.0" width="2" height="2"/><rect x="796.6" y="637.0" width="2" height="2"/><rect x="803.8" y="637.0" width="2" height="2"/><rect x="811.0" y="637.0" width="2" height="2"/><rect x="818.2" y="637.0" width="2" height="2"/><rect x="825.4" y="637.0" width="2" height="2"/><rect x="832.6" y="637.0" width="2" height="2"/><rect x="839.8" y="637.0" width="2" height="2"/><rect x="847.0" y="637.0" width="2" height="2"/><rect x="854.2" y="637.0" width="2" height="2"/><rect x="861.4" y="637.0" width="2" height="2"/><rect x="868.6" y="637.0" width="2" height="2"/><rect x="875.8" y="637.0" width="2" height="2"/><rect x="883.0" y="637.0" width="2" height="2"/><rect x="890.2" y="637.0" width="2" height="2"/><rect x="897.4" y="637.0" width="2" height="2"/><rect x="904.6" y="637.0" width="2" height="2"/><rect x="911.8" y="637.0" width="2" height="2"/><rect x="919.0" y="637.0" width="2" height="2"/><rect x="926.2" y="637.0" width="2" height="2"/><rect x="933.4" y="637.0" width="2" height="2"/><rect x="940.6" y="637.0" width="2" height="2"/><rect x="947.8" y="637.0" width="2" height="2"/><rect x="955.0" y="637.0" width="2" height="2"/><rect x="962.2" y="637.0" width="2" height="2"/><rect x="969.4" y="637.0" width="2" height="2"/><rect x="976.6" y="637.0" width="2" height="2"/><rect x="983.8" y="637.0" width="2" height="2"/><rect x="991.0" y="637.0" width="2" height="2"/><rect x="998.2" y="637.0" width="2" height="2"/><rect x="328.6" y="604.5" width="2" height="2"/><rect x="335.8" y="604.5" width="2" height="2"/><rect x="343.0" y="604.5" width="2" height="2"/><rect x="350.2" y="604.5" width="2" height="2"/><rect x="357.4" y="604.5" width="2" height="2"/><rect x="364.6" y="604.5" width="2" height="2"/><rect x="371.8" y="604.5" width="2" height="2"/><rect x="379.0" y="604.5" width="2" height="2"/><rect x="386.2" y="604.5" width="2" height="2"/><rect x="393.4" y="604.5" width="2" height="2"/><rect x="400.6" y="604.5" width="2" height="2"/><rect x="407.8" y="604.5" width="2" height="2"/><rect x="415.0" y="604.5" width="2" height="2"/><rect x="422.2" y="604.5" width="2" height="2"/><rect x="429.4" y="604.5" width="2" height="2"/><rect x="436.6" y="604.5" width="2" height="2"/><rect x="443.8" y="604.5" width="2" height="2"/><rect x="451.0" y="604.5" width="2" height="2"/><rect x="458.2" y="604.5" width="2" height="2"/><rect x="465.4" y="604.5" width="2" height="2"/><rect x="472.6" y="604.5" width="2" height="2"/><rect x="479.8" y="604.5" width="2" height="2"/><rect x="487.0" y="604.5" width="2" height="2"/><rect x="494.2" y="604.5" width="2" height="2"/><rect x="501.4" y="604.5" width="2" height="2"/><rect x="508.6" y="604.5" width="2" height="2"/><rect x="515.8" y="604.5" width="2" height="2"/><rect x="523.0" y="604.5" width="2" height="2"/><rect x="530.2" y="604.5" width="2" height="2"/><rect x="537.4" y="604.5" width="2" height="2"/><rect x="544.6" y="604.5" width="2" height="2"/><rect x="551.8" y="604.5" width="2" height="2"/><rect x="559.0" y="604.5" width="2" height="2"/><rect x="566.2" y="604.5" width="2" height="2"/><rect x="573.4" y="604.5" width="2" height="2"/><rect x="580.6" y="604.5" width="2" height="2"/><rect x="587.8" y="604.5" width="2" height="2"/><rect x="595.0" y="604.5" width="2" height="2"/><rect x="602.2" y="604.5" width="2" height="2"/><rect x="609.4" y="604.5" width="2" height="2"/><rect x="616.6" y="604.5" width="2" height="2"/><rect x="623.8" y="604.5" width="2" height="2"/><rect x="631.0" y="604.5" width="2" height="2"/><rect x="638.2" y="604.5" width="2" height="2"/><rect x="645.4" y="604.5" width="2" height="2"/><rect x="652.6" y="604.5" width="2" height="2"/><rect x="659.8" y="604.5" width="2" height="2"/><rect x="667.0" y="604.5" width="2" height="2"/><rect x="674.2" y="604.5" width="2" height="2"/><rect x="681.4" y="604.5" width="2" height="2"/><rect x="688.6" y="604.5" width="2" height="2"/><rect x="695.8" y="604.5" width="2" height="2"/><rect x="703.0" y="604.5" width="2" height="2"/><rect x="710.2" y="604.5" width="2" height="2"/><rect x="717.4" y="604.5" width="2" height="2"/><rect x="724.6" y="604.5" width="2" height="2"/><rect x="731.8" y="604.5" width="2" height="2"/><rect x="739.0" y="604.5" width="2" height="2"/><rect x="746.2" y="604.5" width="2" height="2"/><rect x="753.4" y="604.5" width="2" height="2"/><rect x="760.6" y="604.5" width="2" height="2"/><rect x="767.8" y="604.5" width="2" height="2"/><rect x="775.0" y="604.5" width="2" height="2"/><rect x="782.2" y="604.5" width="2" height="2"/><rect x="789.4" y="604.5" width="2" height="2"/><rect x="796.6" y="604.5" width="2" height="2"/><rect x="803.8" y="604.5" width="2" height="2"/><rect x="811.0" y="604.5" width="2" height="2"/><rect x="818.2" y="604.5" width="2" height="2"/><rect x="825.4" y="604.5" width="2" height="2"/><rect x="832.6" y="604.5" width="2" height="2"/><rect x="839.8" y="604.5" width="2" height="2"/><rect x="847.0" y="604.5" width="2" height="2"/><rect x="854.2" y="604.5" width="2" height="2"/><rect x="861.4" y="604.5" width="2" height="2"/><rect x="868.6" y="604.5" width="2" height="2"/><rect x="875.8" y="604.5" width="2" height="2"/><rect x="883.0" y="604.5" width="2" height="2"/><rect x="890.2" y="604.5" width="2" height="2"/><rect x="897.4" y="604.5" width="2" height="2"/><rect x="904.6" y="604.5" width="2" height="2"/><rect x="911.8" y="604.5" width="2" height="2"/><rect x="919.0" y="604.5" width="2" height="2"/><rect x="926.2" y="604.5" width="2" height="2"/><rect x="933.4" y="604.5" width="2" height="2"/><rect x="940.6" y="604.5" width="2" height="2"/><rect x="947.8" y="604.5" width="2" height="2"/><rect x="955.0" y="604.5" width="2" height="2"/><rect x="962.2" y="604.5" width="2" height="2"/><rect x="969.4" y="604.5" width="2" height="2"/><rect x="976.6" y="604.5" width="2" height="2"/><rect x="983.8" y="604.5" width="2" height="2"/><rect x="991.0" y="604.5" width="2" height="2"/><rect x="998.2" y="604.5" width="2" height="2"/></g>
<g stroke="#111" stroke-width="1.6"><line x1="338.1" y1="735.5" x2="338.1" y2="731.5"/><line x1="338.1" y1="573" x2="338.1" y2="577"/><line x1="352.3" y1="735.5" x2="352.3" y2="727.0"/><line x1="352.3" y1="573" x2="352.3" y2="581.5"/><line x1="366.6" y1="735.5" x2="366.6" y2="731.5"/><line x1="366.6" y1="573" x2="366.6" y2="577"/><line x1="380.8" y1="735.5" x2="380.8" y2="731.5"/><line x1="380.8" y1="573" x2="380.8" y2="577"/><line x1="395.1" y1="735.5" x2="395.1" y2="731.5"/><line x1="395.1" y1="573" x2="395.1" y2="577"/><line x1="409.3" y1="735.5" x2="409.3" y2="731.5"/><line x1="409.3" y1="573" x2="409.3" y2="577"/><line x1="423.6" y1="735.5" x2="423.6" y2="731.5"/><line x1="423.6" y1="573" x2="423.6" y2="577"/><line x1="437.8" y1="735.5" x2="437.8" y2="727.0"/><line x1="437.8" y1="573" x2="437.8" y2="581.5"/><line x1="452.1" y1="735.5" x2="452.1" y2="731.5"/><line x1="452.1" y1="573" x2="452.1" y2="577"/><line x1="466.3" y1="735.5" x2="466.3" y2="731.5"/><line x1="466.3" y1="573" x2="466.3" y2="577"/><line x1="480.6" y1="735.5" x2="480.6" y2="731.5"/><line x1="480.6" y1="573" x2="480.6" y2="577"/><line x1="494.8" y1="735.5" x2="494.8" y2="731.5"/><line x1="494.8" y1="573" x2="494.8" y2="577"/><line x1="509.1" y1="735.5" x2="509.1" y2="731.5"/><line x1="509.1" y1="573" x2="509.1" y2="577"/><line x1="523.3" y1="735.5" x2="523.3" y2="727.0"/><line x1="523.3" y1="573" x2="523.3" y2="581.5"/><line x1="537.5" y1="735.5" x2="537.5" y2="731.5"/><line x1="537.5" y1="573" x2="537.5" y2="577"/><line x1="551.8" y1="735.5" x2="551.8" y2="731.5"/><line x1="551.8" y1="573" x2="551.8" y2="577"/><line x1="566.0" y1="735.5" x2="566.0" y2="731.5"/><line x1="566.0" y1="573" x2="566.0" y2="577"/><line x1="580.3" y1="735.5" x2="580.3" y2="731.5"/><line x1="580.3" y1="573" x2="580.3" y2="577"/><line x1="594.5" y1="735.5" x2="594.5" y2="731.5"/><line x1="594.5" y1="573" x2="594.5" y2="577"/><line x1="608.8" y1="735.5" x2="608.8" y2="727.0"/><line x1="608.8" y1="573" x2="608.8" y2="581.5"/><line x1="623.0" y1="735.5" x2="623.0" y2="731.5"/><line x1="623.0" y1="573" x2="623.0" y2="577"/><line x1="637.3" y1="735.5" x2="637.3" y2="731.5"/><line x1="637.3" y1="573" x2="637.3" y2="577"/><line x1="651.5" y1="735.5" x2="651.5" y2="731.5"/><line x1="651.5" y1="573" x2="651.5" y2="577"/><line x1="665.8" y1="735.5" x2="665.8" y2="731.5"/><line x1="665.8" y1="573" x2="665.8" y2="577"/><line x1="680.0" y1="735.5" x2="680.0" y2="731.5"/><line x1="680.0" y1="573" x2="680.0" y2="577"/><line x1="694.3" y1="735.5" x2="694.3" y2="727.0"/><line x1="694.3" y1="573" x2="694.3" y2="581.5"/><line x1="708.5" y1="735.5" x2="708.5" y2="731.5"/><line x1="708.5" y1="573" x2="708.5" y2="577"/><line x1="722.8" y1="735.5" x2="722.8" y2="731.5"/><line x1="722.8" y1="573" x2="722.8" y2="577"/><line x1="737.0" y1="735.5" x2="737.0" y2="731.5"/><line x1="737.0" y1="573" x2="737.0" y2="577"/><line x1="751.3" y1="735.5" x2="751.3" y2="731.5"/><line x1="751.3" y1="573" x2="751.3" y2="577"/><line x1="765.5" y1="735.5" x2="765.5" y2="731.5"/><line x1="765.5" y1="573" x2="765.5" y2="577"/><line x1="779.8" y1="735.5" x2="779.8" y2="727.0"/><line x1="779.8" y1="573" x2="779.8" y2="581.5"/><line x1="794.0" y1="735.5" x2="794.0" y2="731.5"/><line x1="794.0" y1="573" x2="794.0" y2="577"/><line x1="808.3" y1="735.5" x2="808.3" y2="731.5"/><line x1="808.3" y1="573" x2="808.3" y2="577"/><line x1="822.5" y1="735.5" x2="822.5" y2="731.5"/><line x1="822.5" y1="573" x2="822.5" y2="577"/><line x1="836.8" y1="735.5" x2="836.8" y2="731.5"/><line x1="836.8" y1="573" x2="836.8" y2="577"/><line x1="851.0" y1="735.5" x2="851.0" y2="731.5"/><line x1="851.0" y1="573" x2="851.0" y2="577"/><line x1="865.3" y1="735.5" x2="865.3" y2="727.0"/><line x1="865.3" y1="573" x2="865.3" y2="581.5"/><line x1="879.5" y1="735.5" x2="879.5" y2="731.5"/><line x1="879.5" y1="573" x2="879.5" y2="577"/><line x1="893.8" y1="735.5" x2="893.8" y2="731.5"/><line x1="893.8" y1="573" x2="893.8" y2="577"/><line x1="908.0" y1="735.5" x2="908.0" y2="731.5"/><line x1="908.0" y1="573" x2="908.0" y2="577"/><line x1="922.3" y1="735.5" x2="922.3" y2="731.5"/><line x1="922.3" y1="573" x2="922.3" y2="577"/><line x1="936.5" y1="735.5" x2="936.5" y2="731.5"/><line x1="936.5" y1="573" x2="936.5" y2="577"/><line x1="950.8" y1="735.5" x2="950.8" y2="727.0"/><line x1="950.8" y1="573" x2="950.8" y2="581.5"/><line x1="965.0" y1="735.5" x2="965.0" y2="731.5"/><line x1="965.0" y1="573" x2="965.0" y2="577"/><line x1="979.3" y1="735.5" x2="979.3" y2="731.5"/><line x1="979.3" y1="573" x2="979.3" y2="577"/><line x1="993.5" y1="735.5" x2="993.5" y2="731.5"/><line x1="993.5" y1="573" x2="993.5" y2="577"/><line x1="324.6" y1="719.2" x2="328.6" y2="719.2"/><line x1="1007" y1="719.2" x2="1003" y2="719.2"/><line x1="324.6" y1="703.0" x2="333.1" y2="703.0"/><line x1="1007" y1="703.0" x2="998.5" y2="703.0"/><line x1="324.6" y1="686.8" x2="328.6" y2="686.8"/><line x1="1007" y1="686.8" x2="1003" y2="686.8"/><line x1="324.6" y1="670.5" x2="333.1" y2="670.5"/><line x1="1007" y1="670.5" x2="998.5" y2="670.5"/><line x1="324.6" y1="654.2" x2="328.6" y2="654.2"/><line x1="1007" y1="654.2" x2="1003" y2="654.2"/><line x1="324.6" y1="638.0" x2="333.1" y2="638.0"/><line x1="1007" y1="638.0" x2="998.5" y2="638.0"/><line x1="324.6" y1="621.8" x2="328.6" y2="621.8"/><line x1="1007" y1="621.8" x2="1003" y2="621.8"/><line x1="324.6" y1="605.5" x2="333.1" y2="605.5"/><line x1="1007" y1="605.5" x2="998.5" y2="605.5"/><line x1="324.6" y1="589.2" x2="328.6" y2="589.2"/><line x1="1007" y1="589.2" x2="1003" y2="589.2"/></g>
<rect x="324.6" y="573" width="682.4" height="162.5" fill="none" stroke="#111" stroke-width="2.2"/>
<text x="319.5" y="740.5" text-anchor="end" font-family="Liberation Sans" font-size="14.5" fill="#222" stroke="#222" stroke-width="0.35">0</text>
<text x="319.5" y="708.0" text-anchor="end" font-family="Liberation Sans" font-size="14.5" fill="#222" stroke="#222" stroke-width="0.35">1</text>
<text x="319.5" y="675.5" text-anchor="end" font-family="Liberation Sans" font-size="14.5" fill="#222" stroke="#222" stroke-width="0.35">2</text>
<text x="319.5" y="643.0" text-anchor="end" font-family="Liberation Sans" font-size="14.5" fill="#222" stroke="#222" stroke-width="0.35">3</text>
<text x="319.5" y="610.5" text-anchor="end" font-family="Liberation Sans" font-size="14.5" fill="#222" stroke="#222" stroke-width="0.35">4</text>
<text x="319.5" y="578.0" text-anchor="end" font-family="Liberation Sans" font-size="14.5" fill="#222" stroke="#222" stroke-width="0.35">5</text>
<text x="352.3" y="753.6" text-anchor="middle" font-family="Liberation Sans" font-size="14.2" letter-spacing="-0.5" fill="#222" stroke="#222" stroke-width="0.35">00</text>
<text x="353.3" y="769.2" text-anchor="middle" font-family="Liberation Sans" font-size="13.8" letter-spacing="-0.3" fill="#222" stroke="#222" stroke-width="0.35">Mon</text>
<text x="437.8" y="753.6" text-anchor="middle" font-family="Liberation Sans" font-size="14.2" letter-spacing="-0.5" fill="#222" stroke="#222" stroke-width="0.35">06</text>
<text x="438.8" y="769.2" text-anchor="middle" font-family="Liberation Sans" font-size="13.8" letter-spacing="-0.3" fill="#222" stroke="#222" stroke-width="0.35">Mon</text>
<text x="523.3" y="753.6" text-anchor="middle" font-family="Liberation Sans" font-size="14.2" letter-spacing="-0.5" fill="#222" stroke="#222" stroke-width="0.35">12</text>
<text x="524.3" y="769.2" text-anchor="middle" font-family="Liberation Sans" font-size="13.8" letter-spacing="-0.3" fill="#222" stroke="#222" stroke-width="0.35">Mon</text>
<text x="608.8" y="753.6" text-anchor="middle" font-family="Liberation Sans" font-size="14.2" letter-spacing="-0.5" fill="#222" stroke="#222" stroke-width="0.35">18</text>
<text x="609.8" y="769.2" text-anchor="middle" font-family="Liberation Sans" font-size="13.8" letter-spacing="-0.3" fill="#222" stroke="#222" stroke-width="0.35">Mon</text>
<text x="694.3" y="753.6" text-anchor="middle" font-family="Liberation Sans" font-size="14.2" letter-spacing="-0.5" fill="#222" stroke="#222" stroke-width="0.35">00</text>
<text x="695.3" y="769.2" text-anchor="middle" font-family="Liberation Sans" font-size="13.8" letter-spacing="-0.3" fill="#222" stroke="#222" stroke-width="0.35">Tue</text>
<text x="779.8" y="753.6" text-anchor="middle" font-family="Liberation Sans" font-size="14.2" letter-spacing="-0.5" fill="#222" stroke="#222" stroke-width="0.35">06</text>
<text x="780.8" y="769.2" text-anchor="middle" font-family="Liberation Sans" font-size="13.8" letter-spacing="-0.3" fill="#222" stroke="#222" stroke-width="0.35">Tue</text>
<text x="865.3" y="753.6" text-anchor="middle" font-family="Liberation Sans" font-size="14.2" letter-spacing="-0.5" fill="#222" stroke="#222" stroke-width="0.35">12</text>
<text x="866.3" y="769.2" text-anchor="middle" font-family="Liberation Sans" font-size="13.8" letter-spacing="-0.3" fill="#222" stroke="#222" stroke-width="0.35">Tue</text>
<text x="950.8" y="753.6" text-anchor="middle" font-family="Liberation Sans" font-size="14.2" letter-spacing="-0.5" fill="#222" stroke="#222" stroke-width="0.35">18</text>
<text x="951.8" y="769.2" text-anchor="middle" font-family="Liberation Sans" font-size="13.8" letter-spacing="-0.3" fill="#222" stroke="#222" stroke-width="0.35">Tue</text>
<g stroke="#46618c" stroke-width="1.7"><line x1="368.7" y1="735.5" x2="368.7" y2="723.1"/><line x1="400.2" y1="735.5" x2="400.2" y2="700.6"/><line x1="406.7" y1="735.5" x2="406.7" y2="664.8"/><line x1="410.7" y1="735.5" x2="410.7" y2="707.4"/><line x1="446" y1="735.5" x2="446" y2="700.6"/><line x1="455.3" y1="735.5" x2="455.3" y2="716.6"/><line x1="471.1" y1="735.5" x2="471.1" y2="685.1"/><line x1="482.9" y1="735.5" x2="482.9" y2="687.3"/><line x1="488" y1="735.5" x2="488" y2="707.3"/><line x1="486.8" y1="735.5" x2="486.8" y2="696.6"/><line x1="494.6" y1="735.5" x2="494.6" y2="694"/><line x1="502.6" y1="735.5" x2="502.6" y2="696.6"/><line x1="511.9" y1="735.5" x2="511.9" y2="732.1"/><line x1="522.6" y1="735.5" x2="522.6" y2="720.6"/><line x1="530.1" y1="735.5" x2="530.1" y2="715.3"/><line x1="530.1" y1="735.5" x2="530.1" y2="684.6"/><line x1="538.1" y1="735.5" x2="538.1" y2="713.5"/><line x1="558.9" y1="735.5" x2="558.9" y2="720.4"/><line x1="569.8" y1="735.5" x2="569.8" y2="693.8"/><line x1="622.6" y1="735.5" x2="622.6" y2="716.3"/><line x1="636.9" y1="735.5" x2="636.9" y2="723.1"/><line x1="643.5" y1="735.5" x2="643.5" y2="700.6"/><line x1="662.9" y1="735.5" x2="662.9" y2="723.1"/><line x1="667" y1="735.5" x2="667" y2="729.3"/><line x1="672.2" y1="735.5" x2="672.2" y2="716"/><line x1="672.2" y1="735.5" x2="672.2" y2="712"/><line x1="680" y1="735.5" x2="680" y2="674.6"/><line x1="717.9" y1="735.5" x2="717.9" y2="678"/><line x1="738.8" y1="735.5" x2="738.8" y2="687.6"/><line x1="759.4" y1="735.5" x2="759.4" y2="684.9"/><line x1="764.5" y1="735.5" x2="764.5" y2="684.9"/><line x1="785.4" y1="735.5" x2="785.4" y2="713.6"/><line x1="784" y1="735.5" x2="784" y2="720.4"/><line x1="790.8" y1="735.5" x2="790.8" y2="720.4"/><line x1="793.2" y1="735.5" x2="793.2" y2="707.4"/><line x1="793.2" y1="735.5" x2="793.2" y2="693.8"/><line x1="803.8" y1="735.5" x2="803.8" y2="687.2"/><line x1="844.6" y1="735.5" x2="844.6" y2="700.6"/><line x1="858.8" y1="735.5" x2="858.8" y2="696.5"/><line x1="858.8" y1="735.5" x2="858.8" y2="680.8"/><line x1="865.6" y1="735.5" x2="865.6" y2="709.8"/><line x1="869.6" y1="735.5" x2="869.6" y2="735.3"/><line x1="898.4" y1="735.5" x2="898.4" y2="700"/><line x1="915.3" y1="735.5" x2="915.3" y2="716"/><line x1="914.5" y1="735.5" x2="914.5" y2="725.7"/><line x1="923.7" y1="735.5" x2="923.7" y2="696.6"/><line x1="989.4" y1="735.5" x2="989.4" y2="638.4"/></g>
<circle cx="368.7" cy="723.1" r="3.9" fill="#2e4265" stroke="#263656" stroke-width="1"/>
<circle cx="400.2" cy="700.6" r="3.9" fill="#2e4265" stroke="#263656" stroke-width="1"/>
<circle cx="406.7" cy="664.8" r="3.9" fill="#2e4265" stroke="#263656" stroke-width="1"/>
<circle cx="410.7" cy="707.4" r="3.9" fill="#2e4265" stroke="#263656" stroke-width="1"/>
<circle cx="446" cy="700.6" r="3.9" fill="#2e4265" stroke="#263656" stroke-width="1"/>
<circle cx="455.3" cy="716.6" r="3.9" fill="#2e4265" stroke="#263656" stroke-width="1"/>
<circle cx="471.1" cy="685.1" r="3.9" fill="#2e4265" stroke="#263656" stroke-width="1"/>
<circle cx="482.9" cy="687.3" r="3.9" fill="#2e4265" stroke="#263656" stroke-width="1"/>
<circle cx="488" cy="707.3" r="3.9" fill="#2e4265" stroke="#263656" stroke-width="1"/>
<circle cx="486.8" cy="696.6" r="3.9" fill="#2e4265" stroke="#263656" stroke-width="1"/>
<circle cx="494.6" cy="694" r="3.9" fill="#2e4265" stroke="#263656" stroke-width="1"/>
<circle cx="502.6" cy="696.6" r="3.9" fill="#4d73a6" stroke="#3f6090" stroke-width="1"/>
<circle cx="511.9" cy="732.1" r="3.9" fill="#4d73a6" stroke="#3f6090" stroke-width="1"/>
<circle cx="522.6" cy="720.6" r="3.9" fill="#4d73a6" stroke="#3f6090" stroke-width="1"/>
<circle cx="530.1" cy="715.3" r="3.9" fill="#4d73a6" stroke="#3f6090" stroke-width="1"/>
<circle cx="530.1" cy="684.6" r="3.9" fill="#4d73a6" stroke="#3f6090" stroke-width="1"/>
<circle cx="538.1" cy="713.5" r="3.9" fill="#4d73a6" stroke="#3f6090" stroke-width="1"/>
<circle cx="558.9" cy="720.4" r="3.9" fill="#4d73a6" stroke="#3f6090" stroke-width="1"/>
<circle cx="569.8" cy="693.8" r="3.9" fill="#4d73a6" stroke="#3f6090" stroke-width="1"/>
<circle cx="622.6" cy="716.3" r="3.9" fill="#4d73a6" stroke="#3f6090" stroke-width="1"/>
<circle cx="636.9" cy="723.1" r="3.9" fill="#4d73a6" stroke="#3f6090" stroke-width="1"/>
<circle cx="643.5" cy="700.6" r="3.9" fill="#4d73a6" stroke="#3f6090" stroke-width="1"/>
<circle cx="662.9" cy="723.1" r="3.9" fill="#4d73a6" stroke="#3f6090" stroke-width="1"/>
<circle cx="667" cy="729.3" r="3.9" fill="#ece01e" stroke="#8a8232" stroke-width="1"/>
<circle cx="672.2" cy="716" r="3.9" fill="#ece01e" stroke="#8a8232" stroke-width="1"/>
<circle cx="672.2" cy="712" r="3.9" fill="#ece01e" stroke="#8a8232" stroke-width="1"/>
<circle cx="680" cy="674.6" r="3.9" fill="#ece01e" stroke="#8a8232" stroke-width="1"/>
<circle cx="717.9" cy="678" r="3.9" fill="#ece01e" stroke="#8a8232" stroke-width="1"/>
<circle cx="738.8" cy="687.6" r="3.9" fill="#ece01e" stroke="#8a8232" stroke-width="1"/>
<circle cx="759.4" cy="684.9" r="3.9" fill="#ece01e" stroke="#8a8232" stroke-width="1"/>
<circle cx="764.5" cy="684.9" r="3.9" fill="#ece01e" stroke="#8a8232" stroke-width="1"/>
<circle cx="785.4" cy="713.6" r="3.9" fill="#ece01e" stroke="#8a8232" stroke-width="1"/>
<circle cx="784" cy="720.4" r="3.9" fill="#ece01e" stroke="#8a8232" stroke-width="1"/>
<circle cx="790.8" cy="720.4" r="3.9" fill="#ece01e" stroke="#8a8232" stroke-width="1"/>
<circle cx="793.2" cy="707.4" r="3.9" fill="#ece01e" stroke="#8a8232" stroke-width="1"/>
<circle cx="793.2" cy="693.8" r="3.9" fill="#ece01e" stroke="#8a8232" stroke-width="1"/>
<circle cx="803.8" cy="687.2" r="3.9" fill="#ece01e" stroke="#8a8232" stroke-width="1"/>
<circle cx="844.6" cy="700.6" r="3.9" fill="#d4921c" stroke="#8a6428" stroke-width="1"/>
<circle cx="858.8" cy="696.5" r="3.9" fill="#d4921c" stroke="#8a6428" stroke-width="1"/>
<circle cx="858.8" cy="680.8" r="3.9" fill="#d4921c" stroke="#8a6428" stroke-width="1"/>
<circle cx="865.6" cy="709.8" r="3.9" fill="#d4921c" stroke="#8a6428" stroke-width="1"/>
<circle cx="869.6" cy="735.3" r="3.9" fill="#d4921c" stroke="#8a6428" stroke-width="1"/>
<circle cx="898.4" cy="700" r="3.9" fill="#d4921c" stroke="#8a6428" stroke-width="1"/>
<circle cx="915.3" cy="716" r="3.9" fill="#d4921c" stroke="#8a6428" stroke-width="1"/>
<circle cx="914.5" cy="725.7" r="3.9" fill="#d4921c" stroke="#8a6428" stroke-width="1"/>
<circle cx="923.7" cy="696.6" r="3.9" fill="#d4921c" stroke="#8a6428" stroke-width="1"/>
<circle cx="989.4" cy="638.4" r="3.9" fill="#a8101e" stroke="#7a1018" stroke-width="1"/>
</svg>
</body></html>
